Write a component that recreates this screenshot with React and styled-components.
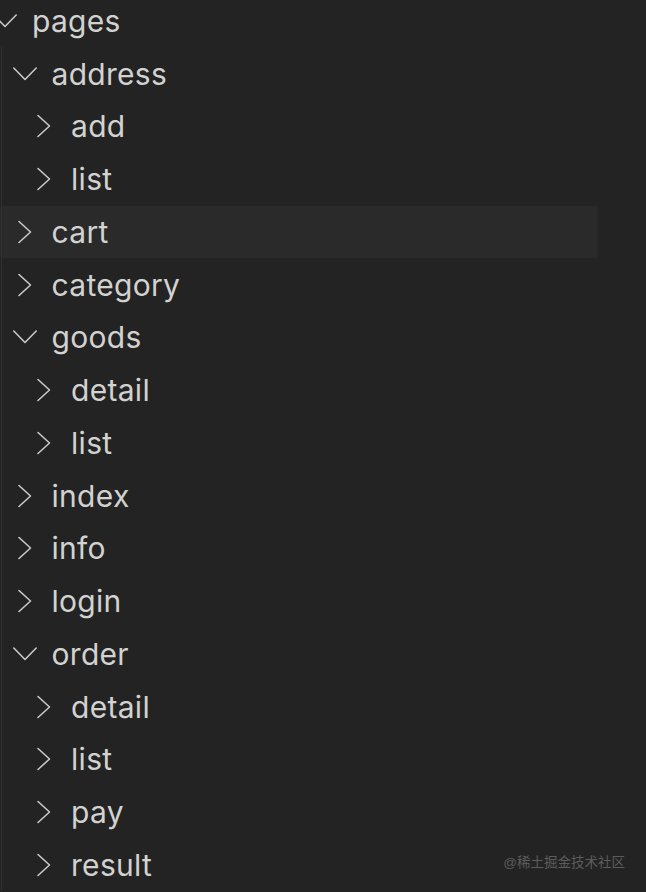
import React from "react";
import styled, { createGlobalStyle } from "styled-components";

const GlobalStyle = createGlobalStyle`
  html, body {
    margin: 0;
    padding: 0;
    background: #232323;
    overflow: hidden;
  }
`;

const tree = [
  {
    name: "pages",
    open: true,
    children: [
      {
        name: "address",
        open: true,
        children: [{ name: "add" }, { name: "list" }],
      },
      { name: "cart", selected: true },
      { name: "category" },
      {
        name: "goods",
        open: true,
        children: [{ name: "detail" }, { name: "list" }],
      },
      { name: "index" },
      { name: "info" },
      { name: "login" },
      {
        name: "order",
        open: true,
        children: [
          { name: "detail" },
          { name: "list" },
          { name: "pay" },
          { name: "result" },
        ],
      },
    ],
  },
];

const Page = styled.div`
  position: relative;
  width: 646px;
  height: 892px;
  background: #232323;
  overflow: hidden;
  font-family: Inter, "Liberation Sans", sans-serif;
`;

const Tree = styled.div`
  width: 598px;
  margin-top: -5.4px;
`;

const Row = styled.div`
  display: flex;
  align-items: center;
  height: 52.75px;
  padding-left: ${(p) => p.level * 19.5}px;
  background: ${(p) => (p.selected ? "#2a2a2a" : "transparent")};
  border-radius: 3px;
  box-sizing: border-box;
`;

const Twistie = styled.span`
  display: flex;
  align-items: center;
  justify-content: center;
  width: 24px;
  height: 24px;
  margin-left: -7px;
  margin-right: 15px;
  flex-shrink: 0;
`;

const Label = styled.span`
  color: #d2d2d0;
  font-size: 30px;
  letter-spacing: 0.3px;
  white-space: nowrap;
`;

const Children = styled.div`
  position: relative;

  &::before {
    content: "";
    display: ${(p) => (p.guide ? "block" : "none")};
    position: absolute;
    left: 1px;
    top: 0;
    bottom: 0;
    width: 1px;
    background: #303030;
  }
`;

const Watermark = styled.div`
  position: absolute;
  right: 21px;
  bottom: 21px;
  color: #5c5c5c;
  font-size: 13.5px;
  font-family: "Liberation Sans", "Noto Sans CJK SC", sans-serif;
`;

const Chevron = ({ open }) => (
  <svg width="24" height="24" viewBox="0 0 24 24" fill="none">
    {open ? (
      <path
        d="M0.8 6 L12 17.5 L23.2 6"
        stroke="#c8c8c8"
        strokeWidth="1.6"
        strokeLinecap="round"
        strokeLinejoin="round"
      />
    ) : (
      <path
        d="M6 1.5 L17.5 12 L6 22.5"
        stroke="#c8c8c8"
        strokeWidth="1.6"
        strokeLinecap="round"
        strokeLinejoin="round"
      />
    )}
  </svg>
);

function Node({ node, level }) {
  return (
    <>
      <Row level={level} selected={node.selected}>
        <Twistie>
          <Chevron open={node.open} />
        </Twistie>
        <Label>{node.name}</Label>
      </Row>
      {node.open && node.children && (
        <Children guide={level === 0}>
          {node.children.map((child, i) => (
            <Node key={child.name + i} node={child} level={level + 1} />
          ))}
        </Children>
      )}
    </>
  );
}

export default function App() {
  return (
    <Page>
      <GlobalStyle />
      <Tree>
        {tree.map((node) => (
          <Node key={node.name} node={node} level={0} />
        ))}
      </Tree>
      <Watermark>@稀土掘金技术社区</Watermark>
    </Page>
  );
}
